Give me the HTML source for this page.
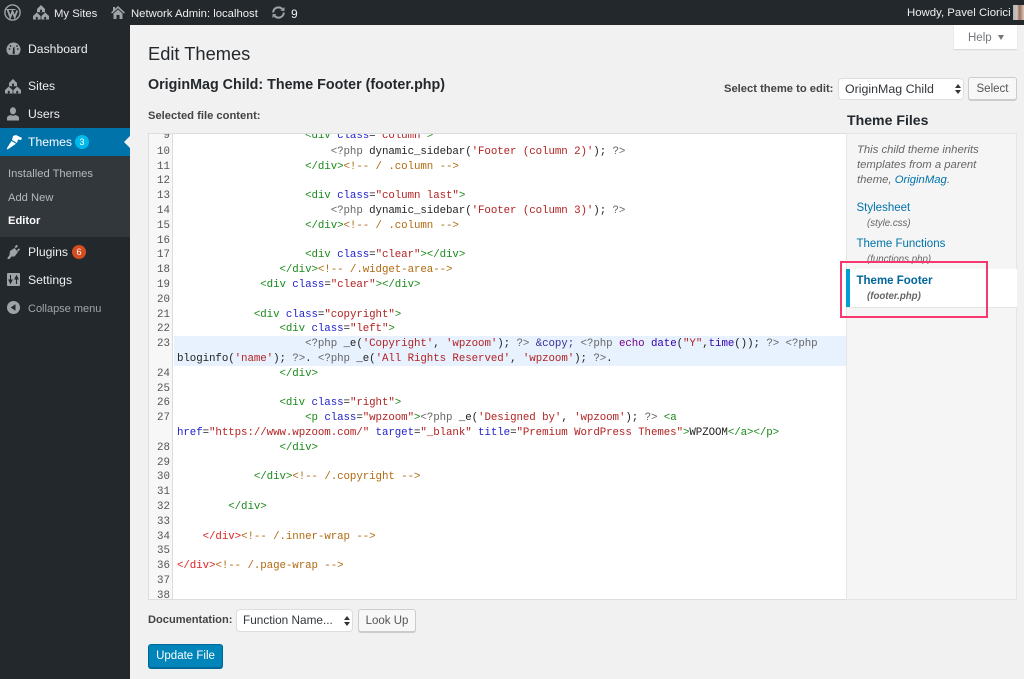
<!DOCTYPE html>
<html><head><meta charset="utf-8"><title>Edit Themes</title>
<style>
html,body{margin:0;padding:0}
body{width:1024px;height:679px;overflow:hidden;background:#f1f1f1;position:relative;font-family:"Liberation Sans",sans-serif;font-size:13px;color:#444}
.a{position:absolute;white-space:nowrap}
svg{position:absolute;display:block}
#bar{position:absolute;left:0;top:0;width:1024px;height:25px;background:#23282d}
#side{position:absolute;left:0;top:25px;width:130px;height:654px;background:#23282d}
.bt{color:#eee;font-size:11.3px;top:5px;line-height:16px}
.mi{color:#eee;left:28px;line-height:18px;font-size:12.2px}
.sub{color:#b4b9be;font-size:11.2px;left:8px;line-height:16px}
.ln{position:absolute;left:149px;width:21px;text-align:right;font:10.8px/15px "Liberation Mono",monospace;color:#555;margin-top:1px}
.c{position:absolute;left:177px;font:10.8px/15px "Liberation Mono",monospace;letter-spacing:-.075px;color:#222;white-space:pre;margin-top:1px}
.g{color:#1a8a1a}.b{color:#2222cc}.r{color:#b32222}.o{color:#b06a10}.m{color:#666}.k{color:#770088}.d{color:#3300aa}.x{color:#e02020}
.sel{background:#fff;border:1px solid #ddd;border-radius:4px;box-sizing:border-box;color:#32373c}
.btn{background:#f7f7f7;border:1px solid #ccc;border-radius:3px;box-shadow:0 1px 0 #ccc;box-sizing:border-box;color:#555;text-align:center}
.lnk{color:#0073aa}
.it{font-style:italic;color:#666}
</style></head><body>

<div id="bar"></div>
<div id="side"></div>

<!-- admin bar icons -->
<svg style="left:4px;top:4px" width="17" height="17" viewBox="0 0 17 17"><circle cx="8.500" cy="8.500" r="7.600" fill="none" stroke="#9ea3a8" stroke-width="1.400"/><path d="M3.600 5.800 6.300 13.200 8.500 7.200 10.700 13.200 13.200 6.400" fill="none" stroke="#9ea3a8" stroke-width="1.800"/><path d="M2.500 5h5v1h-5zM7.500 5h4v1h-4z" fill="#9ea3a8"/></svg>
<svg style="left:33px;top:5px" width="16" height="15" viewBox="0 0 16 15"><path d="M8 0 12 4V7.200H4V4zM3.800 7.500 7.600 11V14.500H0V11zM12.200 7.500 16 11V14.500H8.400V11z" fill="#9ea3a8"/><rect x="7" y="4.500" width="2" height="2.700" rx="1" fill="#23282d"/><rect x="2.800" y="11.800" width="2" height="2.700" rx="1" fill="#23282d"/><rect x="11.200" y="11.800" width="2" height="2.700" rx="1" fill="#23282d"/></svg>
<div class="a bt" style="left:54px;top:5.500px">My Sites</div>
<svg style="left:111px;top:6px" width="14" height="13" viewBox="0 0 14 13"><path d="M7 0 14 6.500 12.800 7.500 7 2.300 1.200 7.500 0 6.500 2 4.600V1h2v1.800z" fill="#9ea3a8"/><path d="M2.500 7.500 7 3.500 11.500 7.500V13H8.500V9H5.500V13H2.500z" fill="#9ea3a8"/></svg>
<div class="a bt" style="left:131px;top:5.500px">Network Admin: localhost</div>
<svg style="left:271px;top:6px" width="15" height="13" viewBox="0 0 15 13"><path d="M2.200 6.500A5.300 5.300 0 0 1 11.300 3" fill="none" stroke="#9ea3a8" stroke-width="2"/><path d="M12.800 6.500A5.300 5.300 0 0 1 3.700 10" fill="none" stroke="#9ea3a8" stroke-width="2"/><path d="M9.500 4.800 13.500 5V1zM5.500 8.200 1.500 8V12z" fill="#9ea3a8"/></svg>
<div class="a bt" style="left:291px;top:5.500px;font-size:12px">9</div>
<div class="a bt" style="left:907px;font-size:11.400px">Howdy, Pavel Ciorici</div>
<div class="a" style="left:1013px;top:5px;width:11px;height:15px;background:linear-gradient(90deg,#a9b4bc 0,#cfc4bc 35%,#9c6f5c 60%,#d8c8bc 100%)"></div>

<!-- sidebar -->
<div class="a" style="left:0;top:128px;width:130px;height:28px;background:#0073aa"></div>
<div class="a" style="left:0;top:156px;width:130px;height:81px;background:#32373c"></div>
<div class="a" style="left:124px;top:136px;width:0;height:0;border:6px solid transparent;border-left:0;border-right:6px solid #f1f1f1"></div>

<svg style="left:6px;top:42px" width="15" height="13" viewBox="0 0 15 13"><path d="M7.500.500A7 7 0 0 0 2 11.800L3 12.800H12L13 11.800A7 7 0 0 0 7.500.500z" fill="#9ea3a8"/><path d="M7 6 8.500 4.500 8.700 10.200a1.200 1.200 0 1 1-2 0z" fill="#23282d"/><circle cx="3.500" cy="7" r=".9" fill="#23282d"/><circle cx="4.500" cy="4" r=".9" fill="#23282d"/><circle cx="11" cy="4" r=".9" fill="#23282d"/><circle cx="11.800" cy="7" r=".9" fill="#23282d"/></svg>
<div class="a mi" style="top:40px">Dashboard</div>

<svg style="left:5px;top:79px" width="16" height="15" viewBox="0 0 16 15"><path d="M8 0 12 4V7.200H4V4zM3.800 7.500 7.600 11V14.500H0V11zM12.200 7.500 16 11V14.500H8.400V11z" fill="#9ea3a8"/><rect x="7" y="4.500" width="2" height="2.700" rx="1" fill="#23282d"/><rect x="2.800" y="11.800" width="2" height="2.700" rx="1" fill="#23282d"/><rect x="11.200" y="11.800" width="2" height="2.700" rx="1" fill="#23282d"/></svg>
<div class="a mi" style="top:77px">Sites</div>

<svg style="left:7px;top:107px" width="12" height="14" viewBox="0 0 12 14"><ellipse cx="6" cy="3.800" rx="3" ry="3.600" fill="#9ea3a8"/><path d="M0 13.500V11C0 9 2.500 8.300 4 8c1.300 1 2.700 1 4 0 1.500.3 4 1 4 3v2.500z" fill="#9ea3a8"/></svg>
<div class="a mi" style="top:105px">Users</div>

<svg style="left:6px;top:134px" width="16" height="16" viewBox="0 0 16 16"><path d="M7 2 10 1 16 4 15 6 12 5.500 11 9 6 6z" fill="#fff"/><path d="M5.500 7 10 9.700 6 12.500 1.500 15.500 .8 14.500 3.500 10z" fill="#fff"/></svg>
<div class="a mi" style="top:133px;color:#fff">Themes</div>
<div class="a" style="left:75px;top:135px;width:14px;height:14px;border-radius:7px;background:#00b9eb;color:#fff;font-size:9px;line-height:14px;text-align:center">3</div>

<div class="a sub" style="top:166px">Installed Themes</div>
<div class="a sub" style="top:190px">Add New</div>
<div class="a sub" style="top:213px;color:#fff;font-weight:bold">Editor</div>

<svg style="left:7px;top:244px" width="13" height="15" viewBox="0 0 13 15"><path d="M3 7 7.500 4 11 8 7.500 12.500H4.500L2.500 15H.5V14L2.500 11z" fill="#9ea3a8"/><path d="M7.500 3 9.500.8 11 2 9 4.300zM10 6.300 12 4.300 13 5.500 11 7.500z" fill="#9ea3a8"/></svg>
<div class="a mi" style="top:243px">Plugins</div>
<div class="a" style="left:72px;top:245px;width:14px;height:14px;border-radius:7px;background:#d54e21;color:#fff;font-size:9px;line-height:14px;text-align:center">6</div>

<svg style="left:7px;top:273px" width="13" height="13" viewBox="0 0 13 13"><rect width="13" height="13" rx="1" fill="#9ea3a8"/><path d="M3.500 2V8M2 7h3l-1.500 3zM9.500 11V5M8 6h3L9.500 3z" stroke="#23282d" stroke-width="1.100" fill="#23282d"/></svg>
<div class="a mi" style="top:271px">Settings</div>

<svg style="left:7px;top:301px" width="13" height="13" viewBox="0 0 13 13"><circle cx="6.500" cy="6.500" r="6.500" fill="#9ea3a8"/><path d="M8.500 3.300V9.700L3.700 6.500z" fill="#23282d"/></svg>
<div class="a mi" style="top:300px;color:#a0a5aa;font-size:11px">Collapse menu</div>

<!-- header -->
<div class="a" style="left:954px;top:25px;width:63px;height:24px;background:#fff;box-shadow:0 1px 1px rgba(0,0,0,.12);color:#72777c;font-size:11.500px;line-height:26px;text-indent:14px">Help</div>
<div class="a" style="left:998px;top:35px;width:0;height:0;border:3.500px solid transparent;border-top:5px solid #72777c;border-bottom:0"></div>

<div class="a" style="left:148px;top:42px;font-size:18.300px;line-height:24px;color:#23282d">Edit Themes</div>
<div class="a" style="left:148px;top:76px;font-size:14.300px;line-height:18px;font-weight:bold;color:#23282d">OriginMag Child: Theme Footer (footer.php)</div>
<div class="a" style="left:148px;top:109px;font-size:11.200px;line-height:15px;font-weight:bold;color:#444">Selected file content:</div>

<div class="a" style="left:724px;top:82px;font-size:11.200px;line-height:15px;font-weight:bold;color:#444">Select theme to edit:</div>
<div class="a sel" style="left:838px;top:78px;width:126px;height:22px;font-size:12.400px;line-height:20px;text-indent:6px">OriginMag Child</div>
<svg style="left:955px;top:84px" width="6" height="10" viewBox="0 0 6 10"><path d="M3 0 6 4H0zM3 10 0 6H6z" fill="#333"/></svg>
<div class="a btn" style="left:968px;top:77px;width:49px;height:23px;font-size:11.500px;line-height:22px">Select</div>

<!-- editor -->
<div class="a" style="left:148px;top:133px;width:698px;height:467px;background:#fff;border-top:1px solid #ddd;border-bottom:1px solid #ddd;box-sizing:border-box"></div>
<div class="a" style="left:148px;top:134px;width:25px;height:465px;background:#f7f7f7;border-left:1px solid #ddd;border-right:1px solid #ddd;box-sizing:border-box"></div>
<div class="a" style="left:174px;top:336px;width:672px;height:30px;background:#e8f2ff"></div>

<div class="ln" style="top:128px;clip-path:inset(5px 0 0 0)">9</div>
<div class="c" style="top:128px;clip-path:inset(5px 0 0 0)">                    <span class="g">&lt;div</span> <span class="b">class</span>=<span class="r">"column"</span><span class="g">&gt;</span></div>

<div class="ln" style="top:143.800px">10</div><div class="c" style="top:143.800px">                        <span class="m">&lt;?php</span> dynamic_sidebar(<span class="r">'Footer (column 2)'</span>); <span class="m">?&gt;</span></div>
<div class="ln" style="top:158.600px">11</div><div class="c" style="top:158.600px">                    <span class="g">&lt;/div&gt;</span><span class="o">&lt;!-- / .column --&gt;</span></div>
<div class="ln" style="top:173.400px">12</div>
<div class="ln" style="top:188.200px">13</div><div class="c" style="top:188.200px">                    <span class="g">&lt;div</span> <span class="b">class</span>=<span class="r">"column last"</span><span class="g">&gt;</span></div>
<div class="ln" style="top:203px">14</div><div class="c" style="top:203px">                        <span class="m">&lt;?php</span> dynamic_sidebar(<span class="r">'Footer (column 3)'</span>); <span class="m">?&gt;</span></div>
<div class="ln" style="top:217.800px">15</div><div class="c" style="top:217.800px">                    <span class="g">&lt;/div&gt;</span><span class="o">&lt;!-- / .column --&gt;</span></div>
<div class="ln" style="top:232.600px">16</div>
<div class="ln" style="top:247.400px">17</div><div class="c" style="top:247.400px">                    <span class="g">&lt;div</span> <span class="b">class</span>=<span class="r">"clear"</span><span class="g">&gt;&lt;/div&gt;</span></div>
<div class="ln" style="top:262.200px">18</div><div class="c" style="top:262.200px">                <span class="g">&lt;/div&gt;</span><span class="o">&lt;!-- /.widget-area--&gt;</span></div>
<div class="ln" style="top:277px">19</div><div class="c" style="top:277px">             <span class="g">&lt;div</span> <span class="b">class</span>=<span class="r">"clear"</span><span class="g">&gt;&lt;/div&gt;</span></div>
<div class="ln" style="top:291.800px">20</div>
<div class="ln" style="top:306.600px">21</div><div class="c" style="top:306.600px">            <span class="g">&lt;div</span> <span class="b">class</span>=<span class="r">"copyright"</span><span class="g">&gt;</span></div>
<div class="ln" style="top:321.400px">22</div><div class="c" style="top:321.400px">                <span class="g">&lt;div</span> <span class="b">class</span>=<span class="r">"left"</span><span class="g">&gt;</span></div>
<div class="ln" style="top:336.200px">23</div><div class="c" style="top:336.200px">                    <span class="m">&lt;?php</span> _e(<span class="r">'Copyright'</span>, <span class="r">'wpzoom'</span>); <span class="m">?&gt;</span> <span class="o" style="color:#333399">&amp;copy;</span> <span class="m">&lt;?php</span> <span class="k">echo</span> <span class="d">date</span>(<span class="r">"Y"</span>,<span class="d">time</span>()); <span class="m">?&gt;</span> <span class="m">&lt;?php</span></div>
<div class="c" style="top:351px">bloginfo(<span class="r">'name'</span>); <span class="m">?&gt;</span>. <span class="m">&lt;?php</span> _e(<span class="r">'All Rights Reserved'</span>, <span class="r">'wpzoom'</span>); <span class="m">?&gt;</span>.</div>
<div class="ln" style="top:365.800px">24</div><div class="c" style="top:365.800px">                <span class="g">&lt;/div&gt;</span></div>
<div class="ln" style="top:380.600px">25</div>
<div class="ln" style="top:395.400px">26</div><div class="c" style="top:395.400px">                <span class="g">&lt;div</span> <span class="b">class</span>=<span class="r">"right"</span><span class="g">&gt;</span></div>
<div class="ln" style="top:410.200px">27</div><div class="c" style="top:410.200px">                    <span class="g">&lt;p</span> <span class="b">class</span>=<span class="r">"wpzoom"</span><span class="g">&gt;</span><span class="m">&lt;?php</span> _e(<span class="r">'Designed by'</span>, <span class="r">'wpzoom'</span>); <span class="m">?&gt;</span> <span class="g">&lt;a</span></div>
<div class="c" style="top:425px"><span class="b">href</span>=<span class="r">"https://www.wpzoom.com/"</span> <span class="b">target</span>=<span class="r">"_blank"</span> <span class="b">title</span>=<span class="r">"Premium WordPress Themes"</span><span class="g">&gt;</span>WPZOOM<span class="g">&lt;/a&gt;&lt;/p&gt;</span></div>
<div class="ln" style="top:439.800px">28</div><div class="c" style="top:439.800px">                <span class="g">&lt;/div&gt;</span></div>
<div class="ln" style="top:454.600px">29</div>
<div class="ln" style="top:469.400px">30</div><div class="c" style="top:469.400px">            <span class="g">&lt;/div&gt;</span><span class="o">&lt;!-- /.copyright --&gt;</span></div>
<div class="ln" style="top:484.200px">31</div>
<div class="ln" style="top:499px">32</div><div class="c" style="top:499px">        <span class="g">&lt;/div&gt;</span></div>
<div class="ln" style="top:513.800px">33</div>
<div class="ln" style="top:528.600px">34</div><div class="c" style="top:528.600px">    <span class="x">&lt;/div&gt;</span><span class="o">&lt;!-- /.inner-wrap --&gt;</span></div>
<div class="ln" style="top:543.400px">35</div>
<div class="ln" style="top:558.200px">36</div><div class="c" style="top:558.200px"><span class="x">&lt;/div&gt;</span><span class="o">&lt;!-- /.page-wrap --&gt;</span></div>
<div class="ln" style="top:573px">37</div>
<div class="ln" style="top:587.800px;clip-path:inset(0 0 2px 0)">38</div>

<!-- theme files -->
<div class="a" style="left:847px;top:111px;font-size:14.100px;line-height:18px;font-weight:bold;color:#23282d">Theme Files</div>
<div class="a" style="left:846px;top:133px;width:171px;height:467px;background:#f5f5f5;border:1px solid #e5e5e5;box-sizing:border-box"></div>
<div class="a it" style="left:857px;top:143px;font-size:11.300px;line-height:15px">This child theme inherits<br>templates from a parent<br>theme, <span class="lnk">OriginMag</span>.</div>
<div class="a lnk" style="left:856.500px;top:201px;font-size:11.500px;line-height:15px">Stylesheet</div>
<div class="a it" style="left:867px;top:217px;font-size:9.700px;line-height:14px">(style.css)</div>
<div class="a lnk" style="left:856.500px;top:237px;font-size:11.500px;line-height:15px">Theme Functions</div>
<div class="a it" style="left:867px;top:253px;font-size:9.700px;line-height:14px">(functions.php)</div>
<div class="a" style="left:846px;top:269px;width:171px;height:38px;background:#fff;border-bottom:1px solid #e5e5e5"></div>
<div class="a" style="left:846px;top:269px;width:4px;height:38px;background:#00a0d2"></div>
<div class="a lnk" style="left:856.500px;top:274px;font-size:11.500px;line-height:15px;font-weight:bold;color:#00669b">Theme Footer</div>
<div class="a it" style="left:867px;top:290px;font-size:9.700px;line-height:14px;font-weight:bold">(footer.php)</div>
<div class="a" style="left:840px;top:261px;width:148px;height:57px;border:2px solid #f7386f;box-sizing:border-box"></div>

<!-- bottom -->
<div class="a" style="left:148px;top:613px;font-size:11.100px;line-height:15px;font-weight:bold;color:#444">Documentation:</div>
<div class="a sel" style="left:236px;top:609px;width:117px;height:23px;font-size:11.800px;line-height:21px;text-indent:6px">Function Name...</div>
<svg style="left:344px;top:616px" width="6" height="10" viewBox="0 0 6 10"><path d="M3 0 6 4H0zM3 10 0 6H6z" fill="#333"/></svg>
<div class="a btn" style="left:358px;top:609px;width:58px;height:23px;font-size:11.500px;line-height:22px">Look Up</div>
<div class="a" style="left:148px;top:644px;width:75px;height:24px;background:#0085ba;border:1px solid #006799;border-radius:3px;box-sizing:border-box;color:#fff;font-size:11.500px;line-height:22px;text-align:center;box-shadow:0 1px 0 #006799">Update File</div>

</body></html>
